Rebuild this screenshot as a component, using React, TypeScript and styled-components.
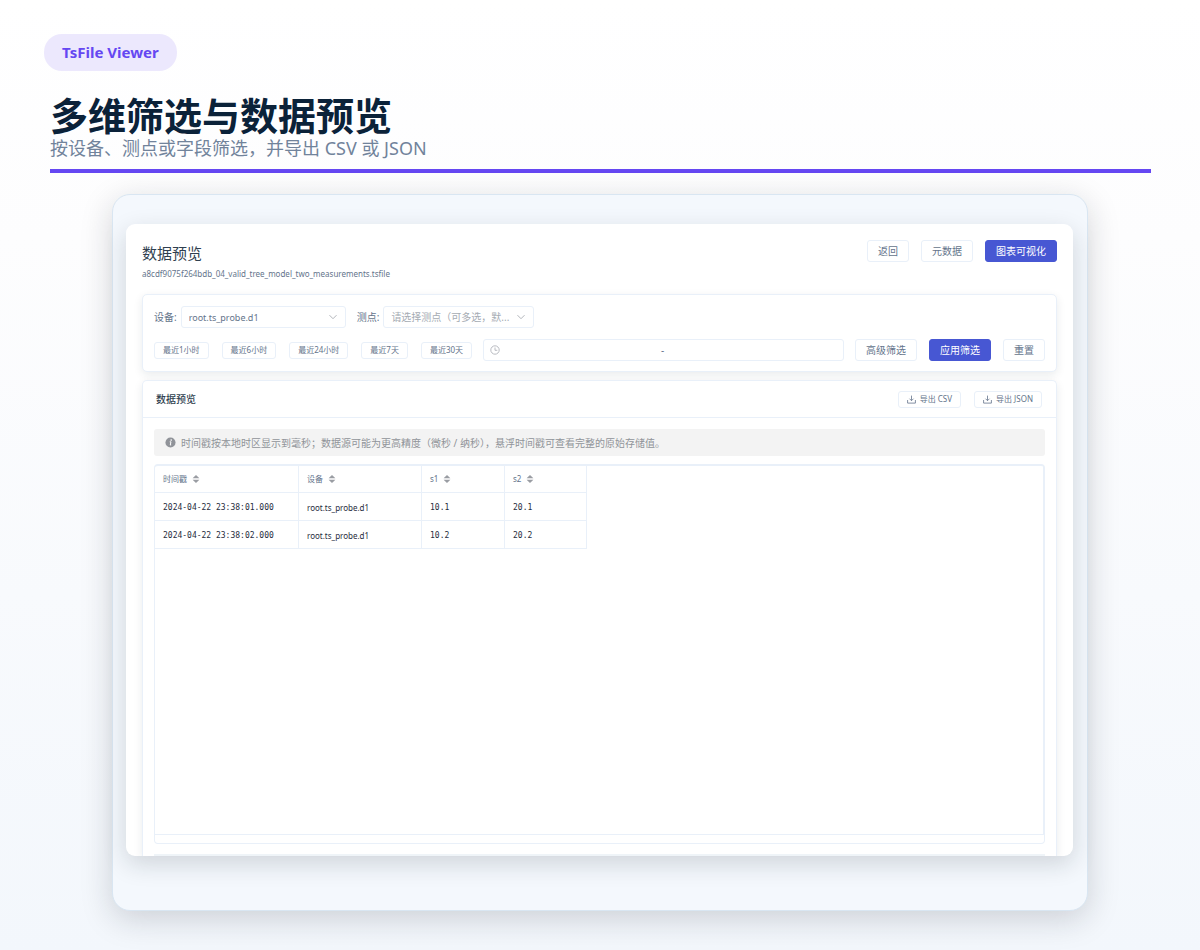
import React from "react";
import styled, { createGlobalStyle, css } from "styled-components";

const SANS = `"Noto Sans", "Noto Sans CJK SC", sans-serif`;
const MONO = `"DejaVu Sans Mono", "Noto Sans CJK SC", monospace`;

const c = {
  accent: "#6547f2",
  primary: "#4757d3",
  line: "#e9f0f9",
  ink: "#1f2d3d",
  slate: "#64748b",
};

const GlobalStyle = createGlobalStyle`
  *, *::before, *::after { box-sizing: border-box; }
  body { margin: 0; background: #f3f7fc; font-family: ${SANS}; }
  button, input, select { font-family: inherit; margin: 0; }
`;

const Page = styled.div`
  min-height: 100vh;
  padding: 34px 0 39px;
  background: linear-gradient(180deg, #ffffff 0%, #fdfdfe 25%, #f3f7fc 100%);
`;

const Hero = styled.header`
  margin: 0 49px 0 50px;
  padding-bottom: 9px;
  border-bottom: 4px solid ${c.accent};
`;

const Badge = styled.span`
  display: inline-block;
  margin-left: -6px;
  padding: 0 18px;
  border-radius: 18px;
  background: #ece8fd;
  color: ${c.accent};
  font-size: 15px;
  font-weight: 700;
  line-height: 37px;
`;

const Title = styled.h1`
  margin: 22px 0 0;
  color: #0b2239;
  font-size: 38px;
  font-weight: 700;
  line-height: 44px;
`;

const Subtitle = styled.p`
  margin: 0;
  color: #71839b;
  font-size: 18px;
  line-height: 23px;
`;

const Frame = styled.main`
  margin: 21px 112px 0;
  padding: 29px 14px 54px 13px;
  border: 1px solid #d9e6f2;
  border-radius: 18px;
  background: #f4f8fd;
  box-shadow: 0 8px 32px rgba(20, 30, 40, 0.18);
`;

const Window = styled.div`
  overflow: hidden;
  padding: 16px 16px 0;
  border-radius: 9px;
  background: #fff;
  box-shadow: 0 8px 24px rgba(20, 30, 40, 0.16);
`;

const WindowHead = styled.div`
  display: flex;
  justify-content: space-between;
  align-items: flex-start;
  height: 54px;
`;

const WindowTitle = styled.h2`
  margin: 3px 0 0;
  color: #303f50;
  font-size: 15px;
  font-weight: 400;
  line-height: 20px;
`;

const FileName = styled.p`
  margin: 5px 0 0;
  color: ${c.slate};
  font-size: 8px;
  line-height: 12px;
`;

const Group = styled.div<{ $gap: number }>`
  display: flex;
  align-items: center;
  gap: ${(p) => p.$gap}px;
`;

const Button = styled.button<{ $primary?: boolean; $small?: boolean }>`
  display: flex;
  align-items: center;
  gap: 4px;
  height: ${(p) => (p.$small ? 17 : 22)}px;
  padding: 0 ${(p) => (p.$small ? 8 : 10)}px;
  border: 1px solid ${c.line};
  border-radius: 3px;
  background: #fff;
  color: ${c.slate};
  font-size: ${(p) => (p.$small ? 8 : 10)}px;
  line-height: 14px;
  white-space: nowrap;
  ${(p) =>
    p.$primary &&
    css`
      border-color: ${c.primary};
      background: ${c.primary};
      color: #fff;
    `}
`;

const Card = styled.section`
  border: 1px solid ${c.line};
  border-radius: 5px;
  background: #fff;
  box-shadow: 0 3px 10px rgba(20, 40, 60, 0.09);
`;

const FilterCard = styled(Card)`
  display: grid;
  gap: 11px;
  padding: 11px 11px 10px;
`;

const Field = styled.label`
  display: flex;
  align-items: center;
  gap: 4px;
  color: ${c.slate};
  font-size: 10px;
  line-height: 14px;
`;

const SelectWrap = styled.span<{ $width: number }>`
  display: grid;
  align-items: center;
  width: ${(p) => p.$width}px;

  & > * {
    grid-area: 1 / 1;
  }

  & > svg {
    justify-self: end;
    margin-right: 8px;
    pointer-events: none;
  }
`;

const Select = styled.select<{ $placeholder?: boolean }>`
  appearance: none;
  width: 100%;
  height: 22px;
  padding: 0 18px 0 7px;
  border: 1px solid ${c.line};
  border-radius: 3px;
  background: #fff;
  color: ${(p) => (p.$placeholder ? "#a5abb3" : c.slate)};
  font-size: ${(p) => (p.$placeholder ? 10 : 9)}px;
`;

const FilterRow = styled.div`
  display: flex;
  align-items: center;
  gap: 11px;
`;

const DateRange = styled.div`
  display: flex;
  flex: 1;
  align-items: center;
  min-width: 0;
  height: 22px;
  padding: 0 18px 0 6px;
  border: 1px solid ${c.line};
  border-radius: 3px;
  color: ${c.slate};
  font-size: 10px;
`;

const DateInput = styled.input`
  flex: 1;
  min-width: 0;
  height: 18px;
  padding: 0;
  border: 0;
  background: transparent;
  color: ${c.slate};
  font-size: 10px;
  text-align: center;
`;

const DataCard = styled(Card)`
  margin-top: 8px;
  border-bottom: 0;
  border-radius: 5px 5px 0 0;
`;

const CardHead = styled.div`
  display: flex;
  justify-content: space-between;
  align-items: center;
  height: 37px;
  padding: 0 14px 0 13px;
  border-bottom: 1px solid ${c.line};
`;

const CardTitle = styled.h3`
  margin: 0;
  color: #303f50;
  font-size: 10px;
  font-weight: 500;
  line-height: 14px;
`;

const CardBody = styled.div`
  padding: 11px 11px 0;
`;

const Notice = styled.div`
  display: flex;
  align-items: center;
  gap: 5px;
  height: 27px;
  padding: 0 11px;
  border-radius: 3px;
  background: #f3f3f3;
  color: #909399;
  font-size: 10px;
  line-height: 14px;
`;

const TablePanel = styled.div`
  margin-top: 8px;
  padding-bottom: 8px;
  border: 1px solid ${c.line};
  border-top-width: 2px;
  border-radius: 4px;
`;

const TableArea = styled.div`
  min-height: 369px;
  border-right: 1px solid ${c.line};
  border-bottom: 1px solid ${c.line};
`;

const Table = styled.table`
  border-collapse: separate;
  border-spacing: 0;
  table-layout: fixed;
  width: 432px;
`;

const cell = css`
  padding: 0 8px;
  border-right: 1px solid ${c.line};
  border-bottom: 1px solid ${c.line};
  text-align: left;
  font-weight: 400;
`;

const Th = styled.th<{ $width: number }>`
  ${cell}
  width: ${(p) => p.$width}px;
  height: 27px;
`;

const Td = styled.td<{ $mono?: boolean }>`
  ${cell}
  height: 28px;
  padding-top: 2px;
  color: ${c.ink};
  font-family: ${(p) => (p.$mono ? MONO : SANS)};
  font-size: 8px;
  line-height: 12px;
`;

const SortButton = styled.button`
  display: flex;
  align-items: center;
  gap: 5px;
  padding: 0;
  border: 0;
  background: none;
  color: ${c.slate};
  font-size: 8px;
  line-height: 12px;
`;

const PagerEdge = styled.div`
  height: 2px;
  margin-top: 10px;
  background: #eff4f8;
`;

const ChevronDown = () => (
  <svg width="10" height="10" viewBox="0 0 10 10" fill="none" stroke="#a8abb2" strokeWidth="0.9" aria-hidden="true">
    <path d="M1.5 3.2 5 6.7 8.5 3.2" />
  </svg>
);

const Clock = () => (
  <svg width="10" height="10" viewBox="0 0 10 10" fill="none" stroke="#a8abb2" strokeWidth="0.8" aria-hidden="true">
    <circle cx="5" cy="5" r="4.2" />
    <path d="M5 2.5V5.3H7.3" />
  </svg>
);

const Download = () => (
  <svg width="9" height="9" viewBox="0 0 9 9" fill="none" stroke={c.slate} strokeWidth="0.8" aria-hidden="true">
    <path d="M4.5 0.6V5.6M2.5 3.7 4.5 5.7 6.5 3.7M0.6 5V8.1H8.4V5" />
  </svg>
);

const Info = () => (
  <svg width="11" height="11" viewBox="0 0 10 10" aria-hidden="true">
    <circle cx="5" cy="5" r="4.6" fill="#909399" />
    <circle cx="5.6" cy="2.8" r="0.75" fill="#fff" />
    <path d="M4.3 4.4H5.4L4.8 7.3H5.6" fill="none" stroke="#fff" strokeWidth="0.9" />
  </svg>
);

const SortIcon = () => (
  <svg width="8" height="8" viewBox="0 0 8 8" fill="#9a9da3" aria-hidden="true">
    <path d="M4 0 7.4 3.2H0.6ZM4 8 0.6 4.8H7.4Z" />
  </svg>
);

const quickRanges = ["最近1小时", "最近6小时", "最近24小时", "最近7天", "最近30天"];

const columns = [
  { label: "时间戳", width: 144 },
  { label: "设备", width: 123 },
  { label: "s1", width: 83 },
  { label: "s2", width: 82 },
];

const rows = [
  ["2024-04-22 23:38:01.000", "root.ts_probe.d1", "10.1", "20.1"],
  ["2024-04-22 23:38:02.000", "root.ts_probe.d1", "10.2", "20.2"],
];

export default function App() {
  return (
    <Page>
      <GlobalStyle />
      <Hero>
        <Badge>TsFile Viewer</Badge>
        <Title>多维筛选与数据预览</Title>
        <Subtitle>按设备、测点或字段筛选，并导出 CSV 或 JSON</Subtitle>
      </Hero>

      <Frame>
        <Window>
          <WindowHead>
            <div>
              <WindowTitle>数据预览</WindowTitle>
              <FileName>a8cdf9075f264bdb_04_valid_tree_model_two_measurements.tsfile</FileName>
            </div>
            <Group $gap={12}>
              <Button type="button">返回</Button>
              <Button type="button">元数据</Button>
              <Button type="button" $primary>图表可视化</Button>
            </Group>
          </WindowHead>

          <FilterCard>
            <FilterRow>
              <Field>
                设备:
                <SelectWrap $width={165}>
                  <Select>
                    <option>root.ts_probe.d1</option>
                  </Select>
                  <ChevronDown />
                </SelectWrap>
              </Field>
              <Field>
                测点:
                <SelectWrap $width={151}>
                  <Select $placeholder>
                    <option>请选择测点（可多选，默...</option>
                  </Select>
                  <ChevronDown />
                </SelectWrap>
              </Field>
            </FilterRow>
            <FilterRow>
              <Group $gap={13}>
                {quickRanges.map((label) => (
                  <Button key={label} type="button" $small>{label}</Button>
                ))}
              </Group>
              <DateRange>
                <Clock />
                <DateInput type="text" aria-label="开始时间" />
                -
                <DateInput type="text" aria-label="结束时间" />
              </DateRange>
              <Group $gap={12}>
                <Button type="button">高级筛选</Button>
                <Button type="button" $primary>应用筛选</Button>
                <Button type="button">重置</Button>
              </Group>
            </FilterRow>
          </FilterCard>

          <DataCard>
            <CardHead>
              <CardTitle>数据预览</CardTitle>
              <Group $gap={13}>
                <Button type="button" $small><Download />导出 CSV</Button>
                <Button type="button" $small><Download />导出 JSON</Button>
              </Group>
            </CardHead>
            <CardBody>
              <Notice role="note">
                <Info />
                <span>时间戳按本地时区显示到毫秒；数据源可能为更高精度（微秒 / 纳秒），悬浮时间戳可查看完整的原始存储值。</span>
              </Notice>
              <TablePanel>
                <TableArea>
                  <Table>
                    <thead>
                      <tr>
                        {columns.map((col) => (
                          <Th key={col.label} $width={col.width} scope="col">
                            <SortButton type="button">{col.label}<SortIcon /></SortButton>
                          </Th>
                        ))}
                      </tr>
                    </thead>
                    <tbody>
                      {rows.map((row) => (
                        <tr key={row[0]}>
                          {row.map((value, i) => (
                            <Td key={i} $mono={i !== 1}>{value}</Td>
                          ))}
                        </tr>
                      ))}
                    </tbody>
                  </Table>
                </TableArea>
              </TablePanel>
              <PagerEdge />
            </CardBody>
          </DataCard>
        </Window>
      </Frame>
    </Page>
  );
}
